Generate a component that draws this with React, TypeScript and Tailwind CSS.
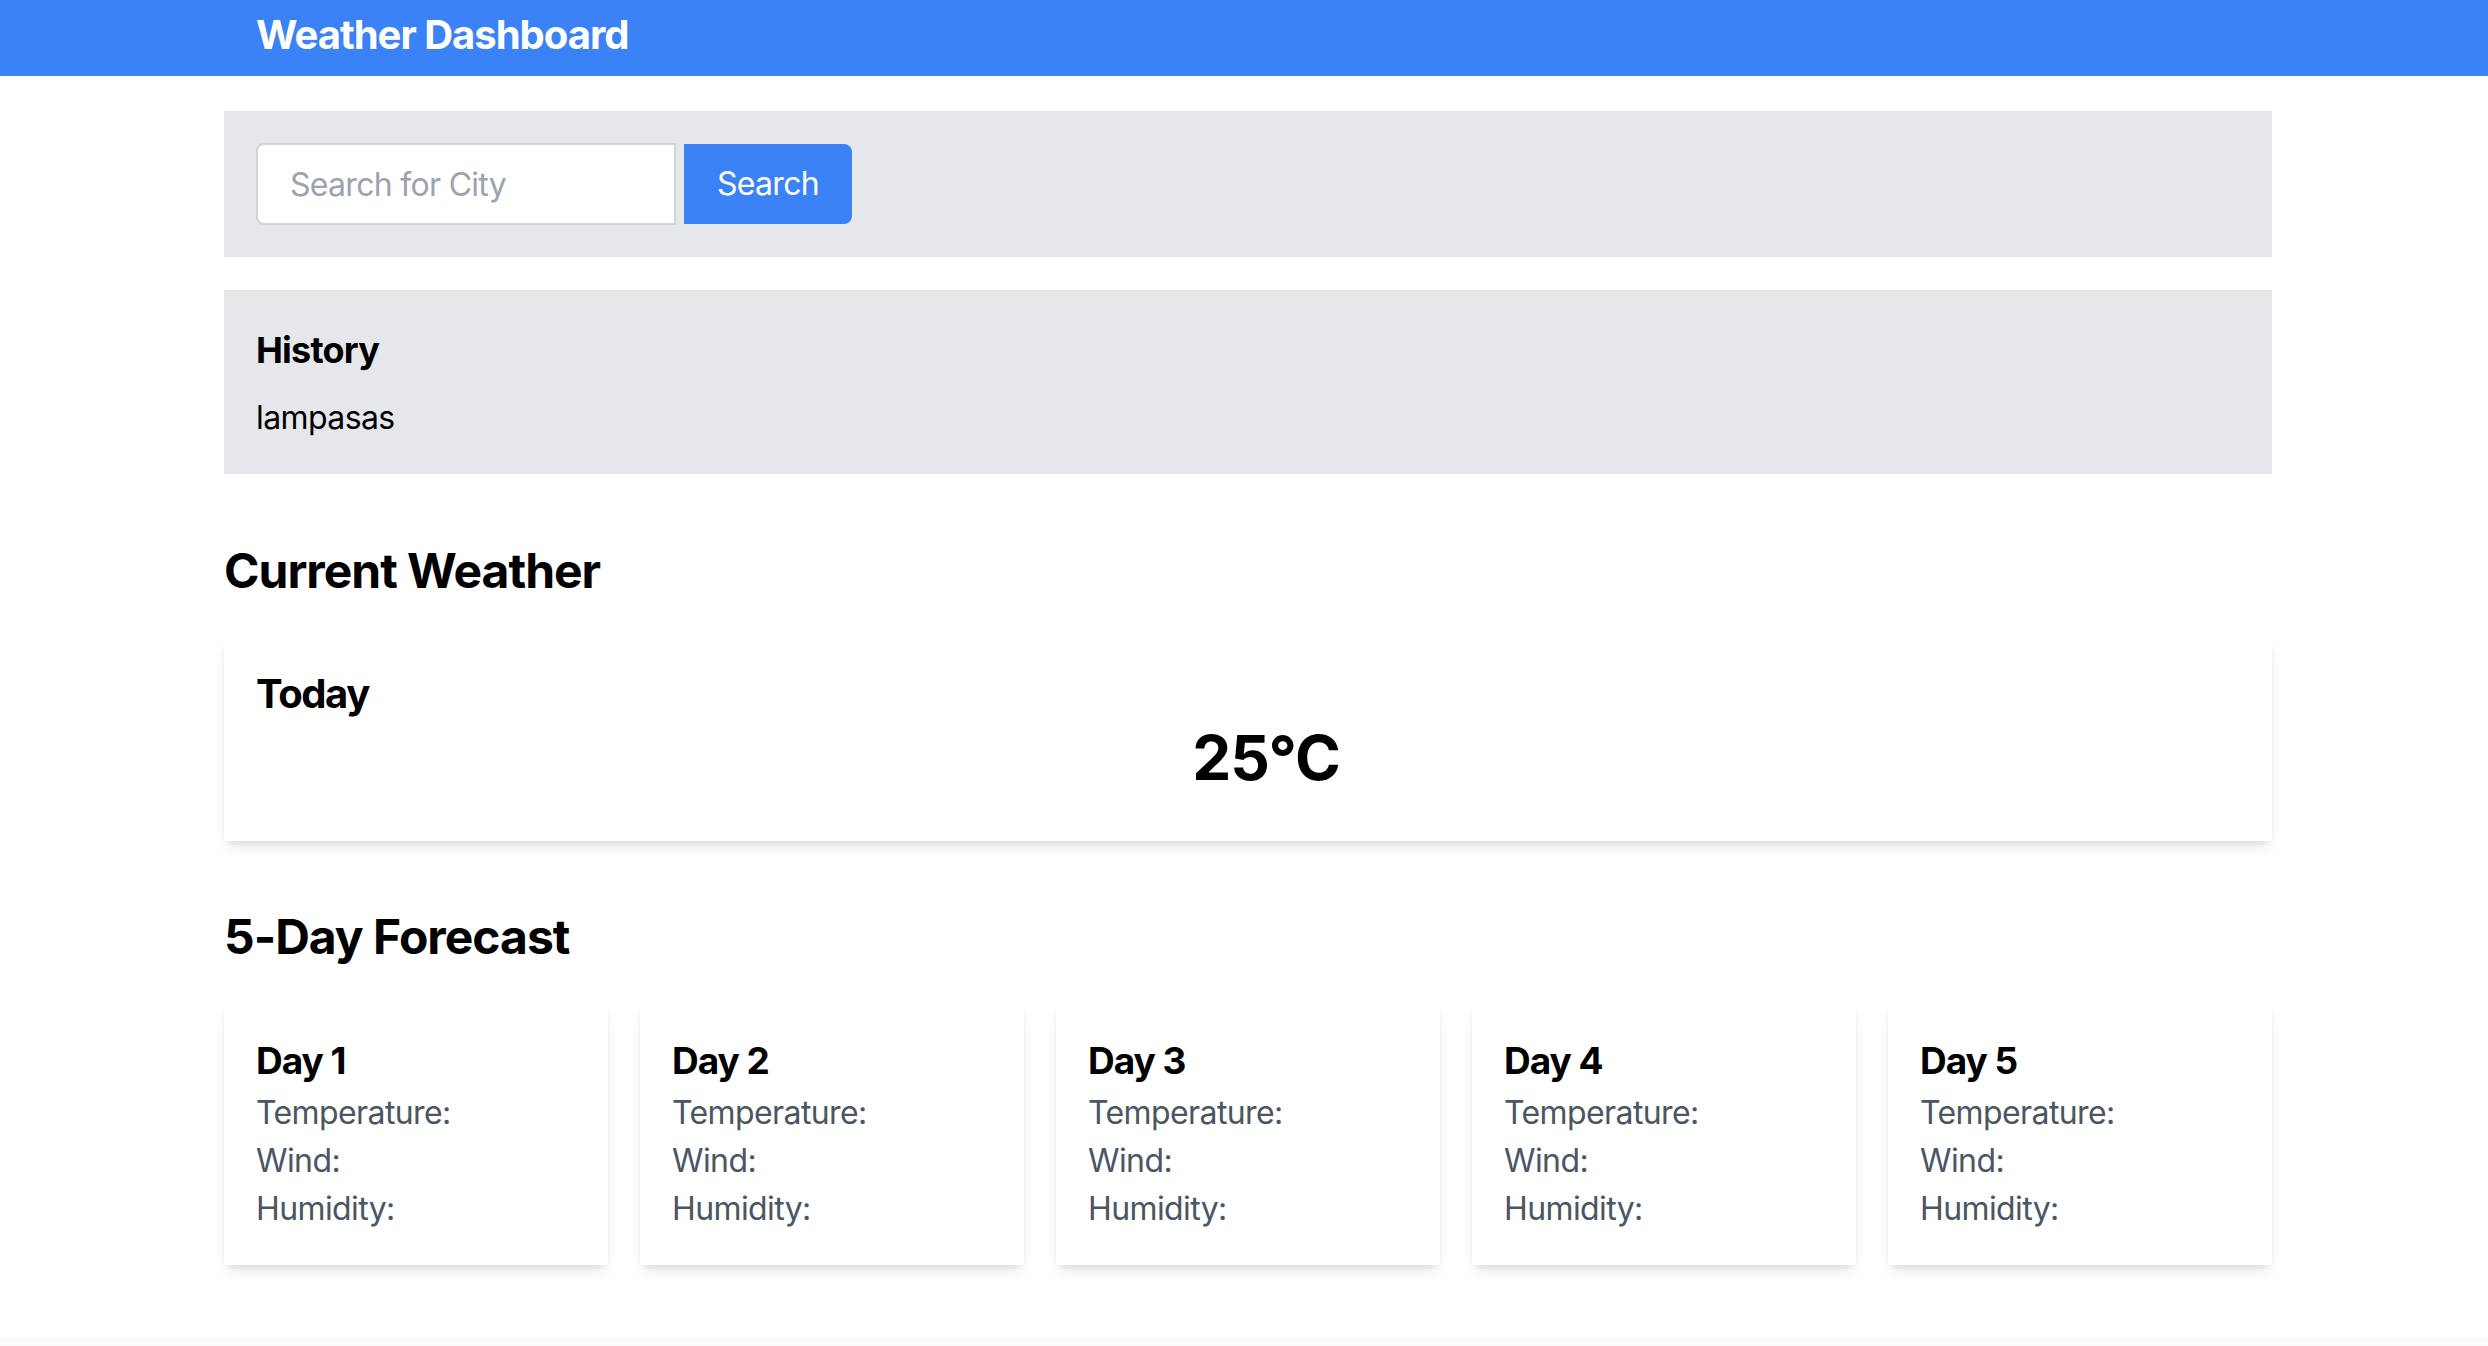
import React from "react";

const days = ["Day 1", "Day 2", "Day 3", "Day 4", "Day 5"];

export default function App() {
  return (
    <div className="h-[1346px] overflow-hidden bg-white text-black flex flex-col" style={{ fontFamily: "Inter, 'Noto Sans', sans-serif" }}>
      <header className="h-[76px] shrink-0 bg-[#3b82f6]">
        <div className="ml-[224px] w-[2048px] px-[32px] h-full flex items-center pb-[6px]">
          <h1 className="text-[40px] leading-[56px] font-bold text-white tracking-[-1px]">Weather Dashboard</h1>
        </div>
      </header>

      <main className="ml-[224px] w-[2048px] pt-[35px] flex-1">
        <section className="bg-[#e5e7eb] p-[32px] flex items-center">
          <input
            type="text"
            placeholder="Search for City"
            className="w-[420px] h-[82px] px-[32px] border-2 border-[#d1d5db] rounded-l-[8px] bg-white text-[32px] tracking-[-0.7px] placeholder-[#9ca3af] outline-none"
          />
          <button className="ml-[8px] h-[80px] px-[33px] bg-[#3b82f6] text-white text-[32px] tracking-[-0.7px] rounded-r-[8px]">
            Search
          </button>
        </section>

        <section className="mt-[33px] bg-[#e5e7eb] p-[32px]">
          <h2 className="text-[36px] leading-[56px] font-bold mb-[16px] tracking-[-0.8px]">History</h2>
          <div className="text-[32px] leading-[48px] tracking-[-0.6px]">lampasas</div>
        </section>

        <h2 className="mt-[65px] mb-[36px] text-[48px] leading-[64px] font-bold tracking-[-1px]">Current Weather</h2>
        <div className="bg-white pt-[27px] pb-[35px] px-[32px] shadow-[0_8px_14px_-3px_rgba(0,0,0,0.1),0_4px_8px_-4px_rgba(0,0,0,0.1)]">
          <h3 className="text-[40px] leading-[56px] font-bold tracking-[-1.4px]">Today</h3>
          <div className="h-[84px] flex items-center justify-center pl-[36px] pb-[12px]">
            <span className="text-[62px] leading-[72px] font-bold tracking-[-1px]">25°C</span>
          </div>
        </div>

        <h2 className="mt-[64px] mb-[32px] text-[48px] leading-[64px] font-bold tracking-[-1px]">5-Day Forecast</h2>
        <div className="grid grid-cols-5 gap-[32px]">
          {days.map((d) => (
            <div key={d} className="bg-white p-[32px] shadow-[0_8px_14px_-3px_rgba(0,0,0,0.1),0_4px_8px_-4px_rgba(0,0,0,0.1)]">
              <h3 className="text-[37px] leading-[56px] font-bold tracking-[-1px]">{d}</h3>
              <p className="text-[32px] leading-[48px] text-[#4b5563] tracking-[-0.6px]">Temperature:</p>
              <p className="text-[32px] leading-[48px] text-[#4b5563] tracking-[-0.6px]">Wind:</p>
              <p className="text-[32px] leading-[48px] text-[#4b5563] tracking-[-0.6px]">Humidity:</p>
            </div>
          ))}
        </div>
      </main>
      <footer className="h-[9px] shrink-0 bg-[#fbfbfb]"></footer>
    </div>
  );
}
